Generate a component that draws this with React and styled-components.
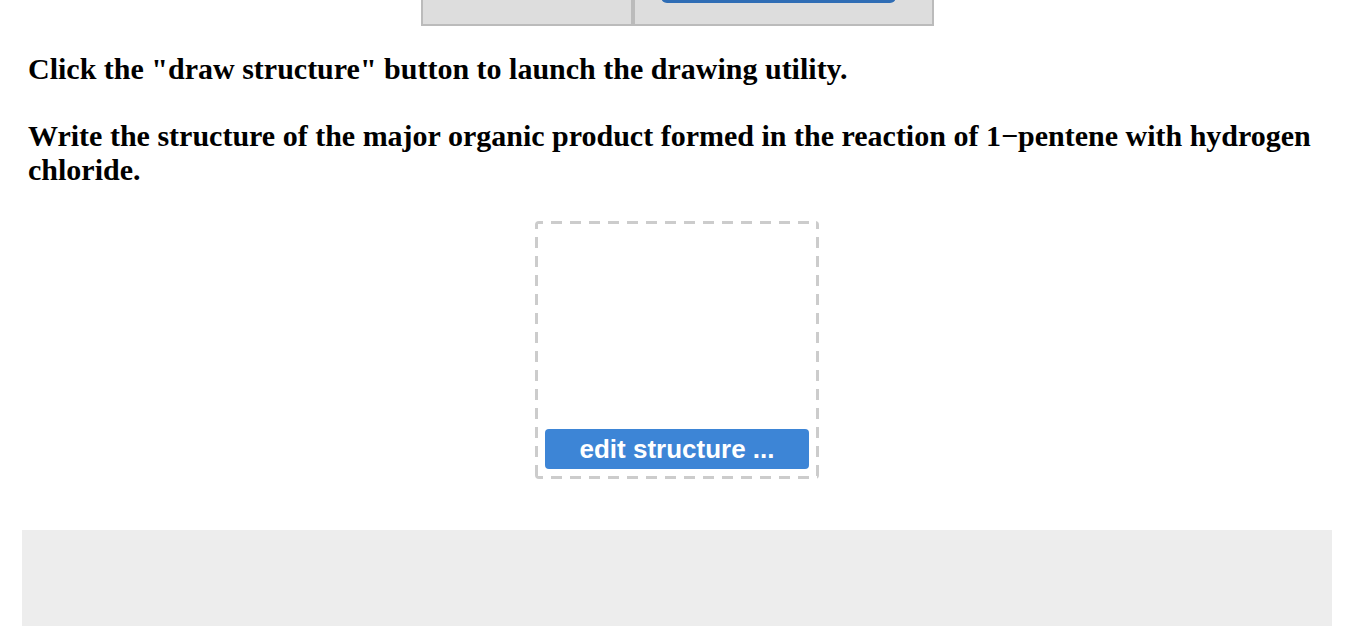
import React from "react";
import styled, { createGlobalStyle } from "styled-components";

const Global = createGlobalStyle`
  html, body { margin: 0; padding: 0; background: #ffffff; }
  body { font-family: "Liberation Serif", "Times New Roman", serif; overflow: hidden; }
`;

const Page = styled.div`
  width: 1310px;
  margin-left: 22px;
  display: flex;
  flex-direction: column;
`;

const TopClip = styled.div`
  height: 26px;
  overflow: hidden;
  display: flex;
  justify-content: center;
  align-items: flex-end;
`;

const ToolTable = styled.div`
  display: flex;
  width: 513px;
  height: 70px;
  box-sizing: border-box;
  border: 2px solid #bbbbbb;
  background: #dddddd;
`;

const ToolCell = styled.div`
  flex: ${(p) => p.$grow};
  display: flex;
  align-items: flex-end;
  padding-left: ${(p) => p.$pad || 0}px;
  padding-bottom: 21px;
  border-left: ${(p) => (p.$divider ? "4px solid #bbbbbb" : "none")};
`;

const DrawButton = styled.div`
  width: 235px;
  height: 40px;
  background: #2f6db5;
  border-radius: 6px;
`;

const Prompt = styled.p`
  margin: 0 0 33px 6px;
  font-size: 30px;
  line-height: 34px;
  font-weight: bold;
  color: #000;
  &:first-of-type { margin-top: 26px; }
`;

const hDash = "repeating-linear-gradient(90deg, #cccccc 0 8px, transparent 8px 16px, #cccccc 16px 19px)";
const vDash = "repeating-linear-gradient(180deg, #cccccc 0 8px, transparent 8px 16px, #cccccc 16px 19px)";

const Sketch = styled.div`
  align-self: center;
  margin-top: 1px;
  width: 284px;
  height: 258px;
  box-sizing: border-box;
  border-radius: 4px;
  padding: 3px 10px 10px 10px;
  background:
    ${hDash} left top / 100% 3px no-repeat,
    ${hDash} left bottom / 100% 3px no-repeat,
    ${vDash} left top / 3px 100% no-repeat,
    ${vDash} right top / 3px 100% no-repeat;
  display: flex;
  align-items: flex-end;
`;

const EditButton = styled.button`
  width: 100%;
  height: 40px;
  border: none;
  border-radius: 4px;
  background: #3d85d6;
  color: #ffffff;
  font-family: "Liberation Sans", Arial, sans-serif;
  font-weight: bold;
  font-size: 26px;
  padding: 0;
  cursor: pointer;
`;

const Footer = styled.div`
  margin-top: 51px;
  height: 120px;
  background: #ededed;
`;

export default function App() {
  return (
    <>
      <Global />
      <Page>
        <TopClip>
          <ToolTable>
            <ToolCell $grow="0 0 208px" />
            <ToolCell $grow="1" $divider $pad={26}>
              <DrawButton />
            </ToolCell>
          </ToolTable>
        </TopClip>
        <Prompt>Click the "draw structure" button to launch the drawing utility.</Prompt>
        <Prompt>
          Write the structure of the major organic product formed in the reaction of 1−pentene with hydrogen chloride.
        </Prompt>
        <Sketch>
          <EditButton>edit structure ...</EditButton>
        </Sketch>
        <Footer />
      </Page>
    </>
  );
}
